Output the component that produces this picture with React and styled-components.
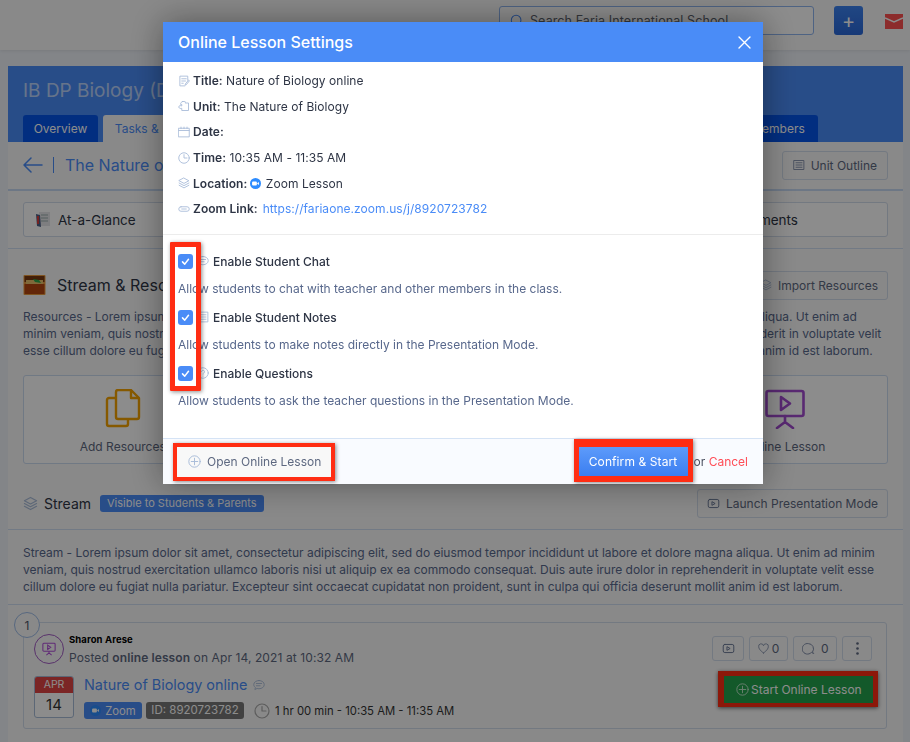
import React from "react";
import styled, { createGlobalStyle } from "styled-components";

const Global = createGlobalStyle`
  html, body { margin: 0; padding: 0; width: 910px; height: 742px; overflow: hidden; background: #fff; }
  body { font-family: Inter, "Liberation Sans", sans-serif; color: #2e3545; -webkit-font-smoothing: antialiased; }
  * { box-sizing: border-box; }
`;

const Page = styled.div`
  width: 910px; height: 742px; overflow: hidden; display: flex; flex-direction: column; background: #eef2f8;
`;
const TopBar = styled.header`
  height: 50px; flex: none; background: #fafafa; display: flex; align-items: flex-start; padding: 6px 0 0 499px; box-shadow: 0 1px 3px rgba(0,0,0,.08);
`;
const Search = styled.div`
  width: 315px; height: 29px; border: 1px solid #8fb4ee; border-radius: 3px; display: flex; align-items: center; gap: 6px; padding-left: 10px; font-size: 12.5px; color: #5d6470; background: #fff; letter-spacing: .1px;
`;
const PlusBtn = styled.div`
  width: 29px; height: 29px; margin-left: 20px; border-radius: 3px; background: linear-gradient(#3c82f0, #2a68d8); color: #fff; display: flex; align-items: center; justify-content: center; font-size: 20px; line-height: 1;
`;
const Mail = styled.div`margin: 7px 0 0 22px;`;
const Main = styled.main`
  margin: 16px 7px 0 8px; flex: 1; background: #fafafa; display: flex; flex-direction: column; min-height: 0;
`;
const Banner = styled.div`
  height: 76px; flex: none; background: #4a8cf7; padding: 12px 0 0 15px; display: flex; flex-direction: column; justify-content: space-between;
`;
const CourseTitle = styled.div`font-size: 19px; color: #fff; opacity: .62; line-height: 26px;`;
const Tabs = styled.div`display: flex; gap: 5px;`;
const Tab = styled.div`
  height: 27px; border-radius: 3px 3px 0 0; display: flex; align-items: center; justify-content: center; font-size: 12px;
  background: ${p => (p.$active ? "#fafafa" : "#0555ea")}; color: ${p => (p.$active ? "#4a8cf7" : "#fff")};
  width: ${p => p.$w}px; margin-left: ${p => p.$ml || 0}px;
`;
const UnitRow = styled.div`
  height: 49px; flex: none; display: flex; align-items: center; padding: 0 15px 1px; border-bottom: 2px solid #c6d9f3; font-size: 16px; color: #4a8cf7;
`;
const Back = styled.span`display: flex; padding-right: 10px; margin-right: 11px; border-right: 1px solid #4a8cf7;`;
const Outline = styled.div`
  margin-left: auto; height: 29px; padding: 0 10px; border: 1px solid #d2dceb; border-radius: 3px; background: #f8f8f8; display: flex; align-items: center; gap: 6px; font-size: 12px; color: #5d6880;
`;
const Glance = styled.div`
  height: 58px; flex: none; padding: 11px 15px; border-bottom: 1px solid #cfdef3;
`;
const GlanceCard = styled.div`
  height: 35px; border: 1px solid #d2dceb; border-radius: 3px; background: #fff; display: flex; align-items: center; justify-content: space-between; padding: 0 89px 0 11px; font-size: 13.5px; color: #2e3545;
`;
const GlanceLeft = styled.span`display: flex; align-items: center; gap: 7px;`;
const Resources = styled.section`padding: 23px 15px 0; flex: none;`;
const SectionHead = styled.div`display: flex; align-items: center; height: 26px; font-size: 16px; gap: 11px;`;
const SmallBtn = styled.div`
  margin-left: auto; height: 29px; padding: 0 9px; border: 1px solid #d2dceb; border-radius: 3px; background: #f8f8f8; display: flex; align-items: center; gap: 6px; font-size: 12px; color: #5d6880;
`;
const Para = styled.p`
  margin: ${p => p.$mt}px 0 0; font-size: 12px; line-height: 17px; color: #58688c; white-space: nowrap; letter-spacing: -.01px;
`;
const Tiles = styled.div`
  margin-top: 16px; height: 89px; border: 1px solid #cddcf1; border-radius: 3px; background: #fff; display: grid; grid-template-columns: 1fr 1fr; align-items: end;
`;
const Tile = styled.div`
  display: flex; flex-direction: column; align-items: center; gap: 10px; padding-bottom: 9px; font-size: 12px; color: #5d6880;
  transform: translateX(${p => p.$x}px);
`;
const StreamHead = styled.div`
  margin-top: 25px; padding: 0 15px; height: 41px; display: flex; align-items: flex-start; flex: none; border-bottom: 1px solid #cfdef3; font-size: 14px; gap: 6px;
`;
const StreamLabel = styled.span`display: flex; align-items: center; gap: 6px; height: 29px;`;
const Chip = styled.span`
  margin: 6px 0 0 3px; height: 17px; padding: 0 7px; border-radius: 3px; background: #4a8cf7; color: #fff; font-size: 11px; line-height: 17px;
`;
const StreamText = styled.div`
  flex: none; height: 75px; padding: 14px 15px 0; border-bottom: 1px solid #cfdef3;
`;
const Feed = styled.div`position: relative; padding: 17px 16px 0 15px;`;
const Num = styled.div`
  position: absolute; left: 6px; top: 7px; width: 26px; height: 26px; border-radius: 50%; border: 1px solid #9fbde8; background: #fafafa; display: flex; align-items: center; justify-content: center; font-size: 12px; color: #4d5566;
`;
const Post = styled.article`
  height: 107px; border: 1px solid #d2dceb; border-radius: 3px; background: #fafafa; padding: 11px 10px 0 10px; display: grid; grid-template-columns: 1fr auto;
`;
const PostBody = styled.div`display: flex; flex-direction: column;`;
const Author = styled.div`display: flex; gap: 5px; height: 34px; font-size: 12px; color: #5d6880; letter-spacing: .1px;`;
const Avatar = styled.span`
  width: 30px; height: 30px; border-radius: 50%; border: 1px solid #a35cc4; display: flex; align-items: center; justify-content: center;
`;
const AuthorName = styled.div`font-size: 9.5px; font-weight: 700; color: #000; line-height: 13px; margin-bottom: 4px; margin-top: -1px;`;
const Strong = styled.b`font-weight: 600;`;
const EventRow = styled.div`display: flex; gap: 10px; margin-top: 8px;`;
const DateTile = styled.div`
  width: 40px; height: 42px; border: 1px solid #a8bcd8; border-radius: 3px; overflow: hidden; background: #fff; text-align: center; font-size: 15px; line-height: 24px; color: #333;
`;
const Month = styled.div`height: 16px; background: #e04444; color: #fff; font-size: 10.5px; line-height: 16px;`;
const EventTitle = styled.div`display: flex; align-items: center; gap: 6px; margin-top: -2px; font-size: 14.4px; color: #4a8cf7; height: 21px;`;
const Meta = styled.div`display: flex; align-items: center; margin-top: 7px; gap: 4px; font-size: 11.3px; color: #333;`;
const ZoomBadge = styled.span`
  height: 17px; width: 58px; justify-content: center; border-radius: 3px; background: #4a8cf7; color: #fff; display: flex; align-items: center; gap: 4px;
`;
const IdBadge = styled.span`height: 17px; width: 98px; text-align: center; border-radius: 3px; background: #777; color: #fff; line-height: 17px; font-size: 11.5px;`;
const ClockWrap = styled.span`display: flex; margin: 0 1px 0 6px;`;
const Actions = styled.div`display: flex; flex-direction: column; align-items: flex-end; padding: 2px 4px 0 0;`;
const ActionRow = styled.div`display: flex; gap: 5px;`;
const ActBtn = styled.div`
  height: 25px; width: ${p => p.$w}px; border: 1px solid #d2dceb; border-radius: 3px; display: flex; align-items: center; justify-content: center; gap: 3px; font-size: 12px; color: #5d6880;
`;
const StartBtn = styled.div`
  position: absolute; right: 25px; top: 66px; width: 160px; height: 36px; border-style: solid; border-color: #ff2d13; border-width: 5px 5px 4px 6px; box-shadow: 0 1px 4px rgba(0,0,0,.6); background: #23a34d; display: flex; align-items: center; gap: 2px; padding-left: 12px; font-size: 12px; color: #fff; white-space: nowrap;
`;
const Scrim = styled.div`position: fixed; inset: 0; background: rgba(0,0,0,.45);`;
const Modal = styled.div`
  position: fixed; left: 163px; top: 22px; width: 600px; height: 462px; background: #fff; display: flex; flex-direction: column; box-shadow: 0 0 32px rgba(0,0,0,.4);
`;
const ModalHeader = styled.div`
  height: 40px; flex: none; background: #4a8cf7; color: #fff; display: flex; align-items: center; justify-content: space-between; padding: 0 12px 0 15px; font-size: 16px; font-weight: 500;
`;
const Details = styled.div`
  height: 173px; flex: none; padding: 6px 15px 0; border-bottom: 1px solid #ececec; display: flex; flex-direction: column;
`;
const Detail = styled.div`
  height: 25.6px; display: flex; align-items: center; font-size: 12px; color: #2e3545; white-space: pre; letter-spacing: .05px;
  & > svg:first-child { margin-right: 3px; }
`;
const Bold = styled.b`font-weight: 600;`;
const Link = styled.span`color: #4a8cf7; margin-left: 5px;`;
const LocationMark = styled.span`display: flex; margin: 0 1px 0 3px;`;
const Options = styled.div`position: relative; flex: 1; padding: 13px 15px 0;`;
const Option = styled.div`height: 56px; display: flex; flex-direction: column;`;
const OptionTop = styled.div`height: 26px; display: flex; align-items: center; gap: 4px; font-size: 12px; font-weight: 500; color: #2e3545;`;
const Check = styled.span`
  width: 15px; height: 15px; border-radius: 3px; background: #4a8cf7; display: flex; align-items: center; justify-content: center;
`;
const OptionDesc = styled.div`font-size: 12px; line-height: 28px; padding-top: 1px; color: #58688c;`;
const Marker = styled.div`
  position: absolute; left: 7px; top: 7px; width: 31px; height: 149px; border: 5px solid #ff2d13; border-radius: 1px; box-shadow: 1px 1px 4px rgba(0,0,0,.45); pointer-events: none;
`;
const Footer = styled.div`
  height: 46px; flex: none; border-top: 1px solid #d5e3f5; background: #f9fbff; display: flex; align-items: center; padding: 0 15px 0 10px; font-size: 12px;
`;
const OpenBtn = styled.div`
  width: 162px; height: 38px; border: 4px solid #ff2d13; background: #f8f8f8; box-shadow: 1px 1px 4px rgba(0,0,0,.45); display: flex; align-items: center; gap: 6px; padding-left: 11px; color: #5d6880;
`;
const ConfirmWrap = styled.div`
  margin: -2px 0 0 auto; width: 119px; height: 43px; border-style: solid; border-color: #ff2d13; border-width: 8px 5px 6px; box-shadow: 1px 1px 4px rgba(0,0,0,.45); display: flex;
`;
const Confirm = styled.div`
  flex: 1; background: linear-gradient(#5d9bfb, #3b7ef0); color: #fff; display: flex; align-items: center; justify-content: center; letter-spacing: .1px;
`;
const Or = styled.span`margin-left: 1px; color: #4a5060; white-space: pre;`;
const Cancel = styled.span`color: #ff4d57;`;

const Ic = ({ c = "#a9bcd9", s = 12, children, vb = 16, w = 1.2 }) => (
  <svg width={s} height={s} viewBox={`0 0 ${vb} ${vb}`} fill="none" stroke={c} strokeWidth={w} strokeLinecap="round" strokeLinejoin="round">{children}</svg>
);

const PlusCircle = ({ c, s = 13 }) => (
  <Ic c={c} s={s}><circle cx="8" cy="8" r="7" /><path d="M8 4v8M4 8h8" /></Ic>
);
const VideoIc = () => (
  <Ic s={13} c="#6a7896"><rect x="1.5" y="3" width="13" height="10" rx="2" /><path d="M6.5 6l3.5 2-3.5 2z" /></Ic>
);
const LayersIc = ({ s = 12 }) => (
  <Ic s={s}><path d="M8 1.5L14.5 5 8 8.5 1.5 5z" /><path d="M1.5 8L8 11.5 14.5 8" /><path d="M1.5 11L8 14.5 14.5 11" /></Ic>
);
const ClockIc = ({ s = 12, c }) => (
  <Ic s={s} c={c}><circle cx="8" cy="8" r="7" /><path d="M8 3.5V8h4" /></Ic>
);
const Chat = ({ s = 12 }) => (
  <Ic s={s}><path d="M8 2c3.9 0 7 2.4 7 5.5S11.900 13 8 13c-.9 0-1.700-.1-2.500-.4L2.500 14l.7-2.700C1.800 10.300 1 9 1 7.500 1 4.400 4.100 2 8 2z" /><path d="M4.500 6h7M4.500 9h5" /></Ic>
);
const Cam = () => (
  <svg width="11" height="11" viewBox="0 0 16 16"><circle cx="8" cy="8" r="8" fill="#2d8cff" /><rect x="3" y="5" width="7" height="6" rx="1.500" fill="#fff" /><path d="M10.500 7.500L13 5.800v4.400L10.500 8.500z" fill="#fff" /></svg>
);
const Tick = () => (
  <svg width="9" height="9" viewBox="0 0 12 12" fill="none" stroke="#fff" strokeWidth="2" strokeLinecap="round" strokeLinejoin="round"><path d="M2 6.500L5 9.500 10 3" /></svg>
);
const Chest = () => (
  <svg width="23" height="22" viewBox="0 0 23 22"><rect x=".5" y="1" width="22" height="20" rx="1" fill="#e89a3c" /><rect x="1.500" y="2" width="20" height="6" fill="#7a3a10" /><rect x="3" y="6" width="17" height="4" fill="#e8c06a" /><path d="M10 5l6 1 2 3-6-1z" fill="#2eaa4a" /><rect x="1.500" y="10" width="20" height="10" fill="#b5460f" /></svg>
);
const Clipboard = () => (
  <svg width="16" height="17" viewBox="0 0 16 17"><rect x="4" y="1" width="11" height="14" fill="#e6e6ea" /><path d="M6 4h7M6 7h7M6 10h7" stroke="#9aa" /><path d="M1 3l4 1 1 12-4-1z" fill="#4b5f86" /><rect x="2" y="5" width="2" height="8" fill="#d23c3c" /></svg>
);

function App() {
  return (
    <>
      <Global />
      <Page>
        <TopBar>
          <Search>
            <Ic c="#4a8cf7" s={14}><circle cx="7" cy="7" r="5.500" /><path d="M11 11l4 4" /></Ic>
            Search Faria International School
          </Search>
          <PlusBtn>+</PlusBtn>
          <Mail>
            <svg width="18" height="15" viewBox="0 0 18 15"><rect width="18" height="15" fill="#ff5050" /><path d="M0 4l9 4 9-4" fill="none" stroke="#fff" strokeWidth="1.500" /></svg>
          </Mail>
        </TopBar>
        <Main>
          <Banner>
            <CourseTitle>IB DP Biology (DP1)</CourseTitle>
            <Tabs>
              <Tab $w={75}>Overview</Tab>
              <Tab $active $w={100}>Tasks &amp; Units</Tab>
              <Tab $w={80} $ml={530}>Members</Tab>
            </Tabs>
          </Banner>
          <UnitRow>
            <Back>
              <svg width="20" height="16" viewBox="0 0 20 16" fill="none" stroke="#4a8cf7" strokeWidth="1.500" strokeLinecap="round" strokeLinejoin="round"><path d="M1 8h18M8 1L1 8l7 7" /></svg>
            </Back>
            The Nature of Biology
            <Outline>
              <Ic c="#7d8aa6" s={12}><rect x="1.500" y="2" width="13" height="12" /><path d="M4 5h8M4 8h8M4 11h8" /></Ic>
              Unit Outline
            </Outline>
          </UnitRow>
          <Glance>
            <GlanceCard>
              <GlanceLeft><Clipboard />At-a-Glance</GlanceLeft>
              <span>Assignments</span>
            </GlanceCard>
          </Glance>
          <Resources>
            <SectionHead>
              <Chest />
              Stream &amp; Resources
              <SmallBtn><LayersIc />Import Resources</SmallBtn>
            </SectionHead>
            <Para $mt={10}>
              Resources - Lorem ipsum dolor sit amet, consectetur adipiscing elit, sed do eiusmod tempor incididunt ut labore et dolore magna aliqua. Ut enim ad<br />
              minim veniam, quis nostrud exercitation ullamco laboris nisi ut aliquip ex ea commodo consequat. Duis aute irure dolor in reprehenderit in voluptate velit<br />
              esse cillum dolore eu fugiat nulla pariatur. Excepteur sint occaecat cupidatat non proident, sunt in culpa qui officia deserunt mollit anim id est laborum.
            </Para>
            <Tiles>
              <Tile $x={-117}>
                <svg width="36" height="40" viewBox="0 0 36 40" fill="none" stroke="#f4a300" strokeWidth="2.400" strokeLinejoin="round"><path d="M11 9H4a2 2 0 00-2 2v24a2 2 0 002 2h17a2 2 0 002-2v-5" /><path d="M13 1h13l8 8v19a2 2 0 01-2 2H13a2 2 0 01-2-2V3a2 2 0 012-2z" /><path d="M26 1v8h8" /></svg>
                Add Resources
              </Tile>
              <Tile $x={114}>
                <svg width="40" height="40" viewBox="0 0 40 40" fill="none" stroke="#a24bd0" strokeWidth="2.600" strokeLinecap="round" strokeLinejoin="round"><rect x="1.500" y="2" width="37" height="25" rx="2" /><path d="M16 8l9 6.500-9 6.500z" /><path d="M20 27v6M20 33l-8 6M20 33l8 6" /></svg>
                Online Lesson
              </Tile>
            </Tiles>
          </Resources>
          <StreamHead>
            <StreamLabel><LayersIc s={15} />Stream</StreamLabel>
            <Chip>Visible to Students &amp; Parents</Chip>
            <SmallBtn><VideoIc />Launch Presentation Mode</SmallBtn>
          </StreamHead>
          <StreamText>
            <Para $mt={0}>
              Stream - Lorem ipsum dolor sit amet, consectetur adipiscing elit, sed do eiusmod tempor incididunt ut labore et dolore magna aliqua. Ut enim ad minim<br />
              veniam, quis nostrud exercitation ullamco laboris nisi ut aliquip ex ea commodo consequat. Duis aute irure dolor in reprehenderit in voluptate velit esse<br />
              cillum dolore eu fugiat nulla pariatur. Excepteur sint occaecat cupidatat non proident, sunt in culpa qui officia deserunt mollit anim id est laborum.
            </Para>
          </StreamText>
          <Feed>
            <Num>1</Num>
            <Post>
              <PostBody>
                <Author>
                  <Avatar>
                    <svg width="14" height="14" viewBox="0 0 16 16" fill="none" stroke="#b04ed8" strokeWidth="1.200"><rect x="1" y="1.500" width="14" height="9" rx="1" /><path d="M6.500 3.500l3.500 2.500-3.500 2.500zM8 10.500v2M8 12.500l-3 2.500M8 12.500l3 2.500" /></svg>
                  </Avatar>
                  <div>
                    <AuthorName>Sharon Arese</AuthorName>
                    Posted <Strong>online lesson</Strong> on Apr 14, 2021 at 10:32 AM
                  </div>
                </Author>
                <EventRow>
                  <DateTile><Month>APR</Month>14</DateTile>
                  <div>
                    <EventTitle>Nature of Biology online <Chat /></EventTitle>
                    <Meta>
                      <ZoomBadge><Cam />Zoom</ZoomBadge>
                      <IdBadge>ID: 8920723782</IdBadge>
                      <ClockWrap><ClockIc s={16} c="#a9a9a9" /></ClockWrap>
                      <span>1 hr 00 min - 10:35 AM - 11:35 AM</span>
                    </Meta>
                  </div>
                </EventRow>
              </PostBody>
              <Actions>
                <ActionRow>
                  <ActBtn $w={32}><VideoIc /></ActBtn>
                  <ActBtn $w={39}><Ic c="#7d8aa6" s={11}><path d="M8 14.500S1 10 1 5.500A3.500 3.500 0 018 4a3.500 3.500 0 017 1.500C15 10 8 14.500 8 14.500z" /></Ic>0</ActBtn>
                  <ActBtn $w={44}><Ic c="#7d8aa6" s={13}><path d="M14 14l-2.500-1.200A6.500 6.500 0 118 2a6.500 6.500 0 015.200 10z" /></Ic>&nbsp;0</ActBtn>
                  <ActBtn $w={30}><svg width="3" height="13" viewBox="0 0 3 13" fill="#5d6880"><circle cx="1.500" cy="1.500" r="1.300" /><circle cx="1.500" cy="6.500" r="1.300" /><circle cx="1.500" cy="11.500" r="1.300" /></svg></ActBtn>
                </ActionRow>
              </Actions>
            </Post>
            <StartBtn><PlusCircle c="#bfe6cb" />Start Online Lesson</StartBtn>
          </Feed>
        </Main>
      </Page>
      <Scrim />
      <Modal>
        <ModalHeader>
          Online Lesson Settings
          <svg width="13" height="13" viewBox="0 0 13 13" stroke="#fff" strokeWidth="1.400" strokeLinecap="round"><path d="M1 1l11 11M12 1L1 12" /></svg>
        </ModalHeader>
        <Details>
          <Detail><Ic><path d="M13 7V1.500H2.500v13H9" /><path d="M5 5h6M5 8h5M5 11h2M15 8l-4 5-1.500.5.300-1.500 4-5z" /></Ic><Bold>Title:</Bold> Nature of Biology online</Detail>
          <Detail><Ic><path d="M6 2h3c1 0 1 1 .5 2h4.500v10H5v-3c-1 .5-3.500.5-4-1.500s3-2.500 4-1.500V6H3.500C3 4 5 2 6 2z" /></Ic><Bold>Unit:</Bold> The Nature of Biology</Detail>
          <Detail><Ic><rect x="1" y="3" width="14" height="11.500" /><path d="M1 6h14M4 1.500v2M8 1.500v2M12 1.500v2" /></Ic><Bold>Date:</Bold></Detail>
          <Detail><ClockIc /><Bold>Time:</Bold> 10:35 AM - 11:35 AM</Detail>
          <Detail><LayersIc /><Bold>Location:</Bold><LocationMark><Cam /></LocationMark> Zoom Lesson</Detail>
          <Detail><Ic><rect x="1" y="5" width="14" height="6" rx="3" /><path d="M5 8h6" /></Ic><Bold>Zoom Link:</Bold><Link>https://fariaone.zoom.us/j/8920723782</Link></Detail>
        </Details>
        <Options>
          <Option>
            <OptionTop><Check><Tick /></Check><Chat />Enable Student Chat</OptionTop>
            <OptionDesc>Allow students to chat with teacher and other members in the class.</OptionDesc>
          </Option>
          <Option>
            <OptionTop><Check><Tick /></Check><Ic><rect x="1.500" y="1.500" width="13" height="13" /><path d="M4 5h8M4 8h8M4 11h8" /></Ic>Enable Student Notes</OptionTop>
            <OptionDesc>Allow students to make notes directly in the Presentation Mode.</OptionDesc>
          </Option>
          <Option>
            <OptionTop><Check><Tick /></Check><Ic><circle cx="8" cy="8" r="7" /><path d="M6 6.200a2 2 0 113 1.800c-.7.400-1 .8-1 1.700M8 12v.3" /></Ic>Enable Questions</OptionTop>
            <OptionDesc>Allow students to ask the teacher questions in the Presentation Mode.</OptionDesc>
          </Option>
          <Marker />
        </Options>
        <Footer>
          <OpenBtn><PlusCircle />Open Online Lesson</OpenBtn>
          <ConfirmWrap><Confirm>Confirm &amp; Start</Confirm></ConfirmWrap>
          <Or>or <Cancel>Cancel</Cancel></Or>
        </Footer>
      </Modal>
    </>
  );
}

export default App;
